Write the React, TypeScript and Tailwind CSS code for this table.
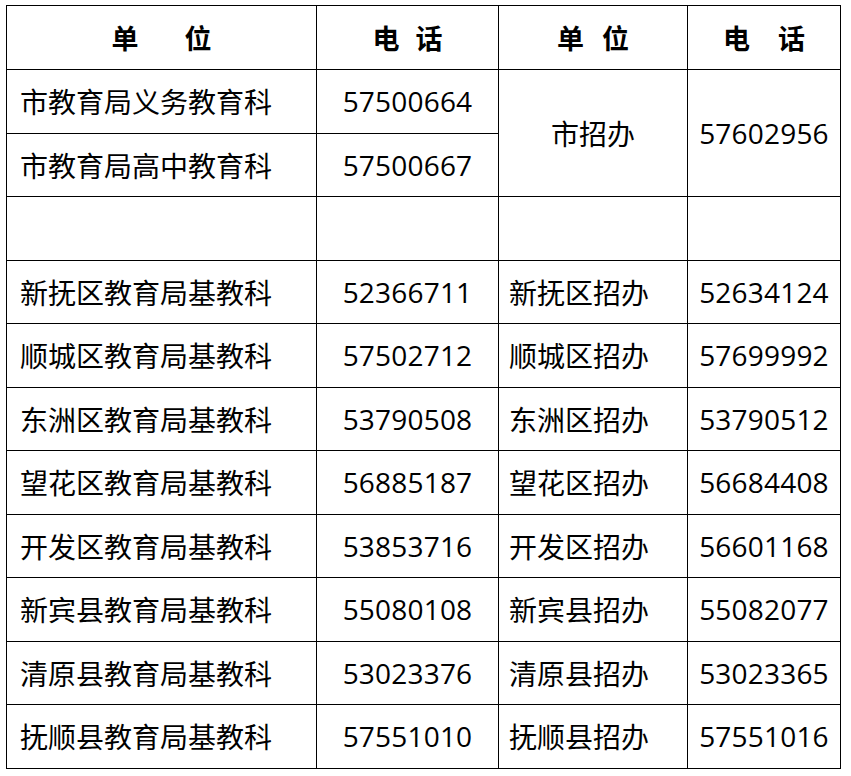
const rows: [string, string, string, string][] = [
  ["新抚区教育局基教科", "52366711", "新抚区招办", "52634124"],
  ["顺城区教育局基教科", "57502712", "顺城区招办", "57699992"],
  ["东洲区教育局基教科", "53790508", "东洲区招办", "53790512"],
  ["望花区教育局基教科", "56885187", "望花区招办", "56684408"],
  ["开发区教育局基教科", "53853716", "开发区招办", "56601168"],
  ["新宾县教育局基教科", "55080108", "新宾县招办", "55082077"],
  ["清原县教育局基教科", "53023376", "清原县招办", "53023365"],
  ["抚顺县教育局基教科", "57551010", "抚顺县招办", "57551016"],
];

const cell = "border border-black h-[63.5px] p-0 align-middle";
const num = "font-['Open_Sans','Noto_Sans_CJK_SC',sans-serif] tracking-[0.2px]";

export default function App() {
  return (
    <div
      className="w-[851px] h-[776px] bg-white pt-[5px] pl-[6px] text-black"
      style={{ fontFamily: '"Noto Sans CJK SC", "Noto Sans", sans-serif' }}
    >
      <table className="border-collapse table-fixed w-[834px] text-[28px] leading-none">
        <colgroup>
          <col className="w-[310px]" />
          <col className="w-[182px]" />
          <col className="w-[189px]" />
          <col className="w-[153px]" />
        </colgroup>
        <thead>
          <tr className="font-bold text-[27px]">
            <th className={`${cell} h-[64px] text-center`}>
              单<span className="inline-block w-[46px]" />位
            </th>
            <th className={`${cell} h-[64px] text-center`}>
              电<span className="inline-block w-[16px]" />话
            </th>
            <th className={`${cell} h-[64px] text-center`}>
              单<span className="inline-block w-[18px]" />位
            </th>
            <th className={`${cell} h-[64px] text-center`}>
              电<span className="inline-block w-[28px]" />话
            </th>
          </tr>
        </thead>
        <tbody>
          <tr>
            <td className={`${cell} pl-[13px]`}>市教育局义务教育科</td>
            <td className={`${cell} ${num} text-center`}>57500664</td>
            <td rowSpan={2} className={`${cell} text-center`}>市招办</td>
            <td rowSpan={2} className={`${cell} ${num} text-center`}>57602956</td>
          </tr>
          <tr>
            <td className={`${cell} pl-[13px]`}>市教育局高中教育科</td>
            <td className={`${cell} ${num} text-center`}>57500667</td>
          </tr>
          <tr>
            <td className={cell} />
            <td className={cell} />
            <td className={cell} />
            <td className={cell} />
          </tr>
          {rows.map(([a, b, c, d]) => (
            <tr key={a}>
              <td className={`${cell} pl-[13px]`}>{a}</td>
              <td className={`${cell} ${num} text-center`}>{b}</td>
              <td className={`${cell} pl-[10px]`}>{c}</td>
              <td className={`${cell} ${num} text-center`}>{d}</td>
            </tr>
          ))}
        </tbody>
      </table>
    </div>
  );
}
